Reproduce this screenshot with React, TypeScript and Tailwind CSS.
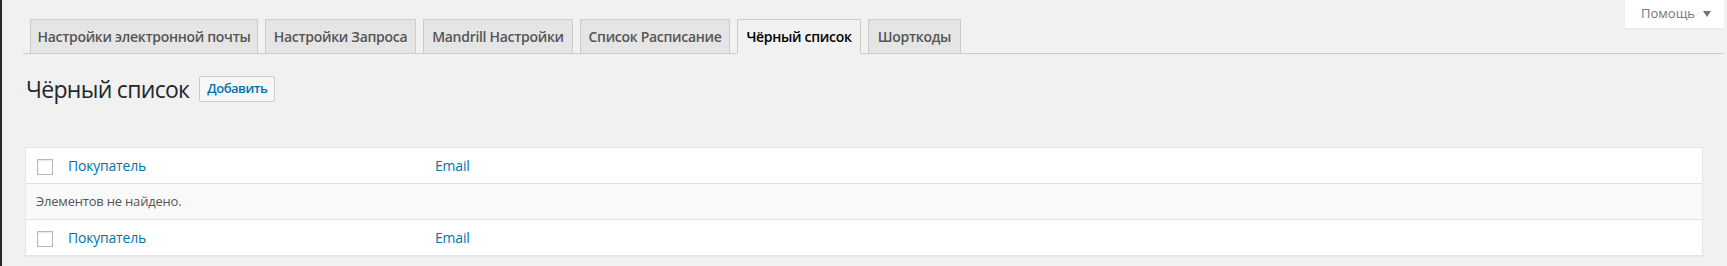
import React from "react";

const tabs = [
  { label: "Настройки электронной почты", w: "w-[228px]", active: false },
  { label: "Настройки Запроса", w: "w-[151px]", active: false },
  { label: "Mandrill Настройки", w: "w-[150px]", active: false },
  { label: "Список Расписание", w: "w-[150px]", active: false },
  { label: "Чёрный список", w: "w-[124px]", active: true },
  { label: "Шорткоды", w: "w-[93px]", active: false },
];

function Checkbox() {
  return (
    <span className="block h-[16px] w-[16px] border border-[#b4b9be] bg-white shadow-[inset_0_1px_2px_rgba(0,0,0,0.1)]" />
  );
}

function HeadRow({ last }: { last?: boolean }) {
  return (
    <div
      className={
        "flex items-center bg-white " +
        (last ? "h-[35px]" : "h-[36px] border-b border-[#e1e1e1]")
      }
    >
      <div className="flex w-[32px] shrink-0 items-center pl-[11px] pt-[2px]">
        <Checkbox />
      </div>
      <div className="w-[367px] shrink-0 pl-[10px] text-[14px] tracking-[-0.2px] text-[#0073aa]">Покупатель</div>
      <div className="flex-1 pl-[10px] text-[14px] tracking-[-0.2px] text-[#0073aa]">Email</div>
    </div>
  );
}

export default function App() {
  return (
    <div className="relative flex min-h-[266px] w-full bg-[#f1f1f1] font-['Open_Sans','Noto_Sans',sans-serif] text-[#444]">
      <div className="w-[2px] shrink-0 bg-[#23282d]" />
      <div className="flex-1 pl-[21px] pr-[3px]">
        <div className="flex gap-[7px] border-b border-[#ccc] pl-[7px] pt-[19px]">
          {tabs.map((t) => (
            <div
              key={t.label}
              className={
                "-mb-px flex h-[35px] shrink-0 items-center justify-center whitespace-nowrap border border-[#ccc] text-[14px] font-semibold leading-[24px] tracking-[-0.3px] " +
                t.w +
                " " +
                (t.active
                  ? "border-b-[#f1f1f1] bg-[#f1f1f1] text-black"
                  : "bg-[#e5e5e5] text-[#555]")
              }
            >
              {t.label}
            </div>
          ))}
        </div>

        <div className="ml-[3px] mt-[22px] flex items-center gap-[10px]">
          <h1 className="text-[23px] font-normal leading-[26px] tracking-[-0.7px] text-[#23282d]">Чёрный список</h1>
          <button className="h-[26px] rounded-[2px] border border-[#ccc] bg-[#f7f7f7] px-[7px] text-[13px] font-semibold tracking-[-0.5px] text-[#0073aa]">
            Добавить
          </button>
        </div>

        <div className="ml-[2px] mr-[21px] mt-[45px] border border-[#e5e5e5] bg-white shadow-[0_1px_1px_rgba(0,0,0,0.04)]">
          <HeadRow />
          <div className="flex h-[36px] items-center border-b border-[#e1e1e1] bg-[#f9f9f9] pl-[10px] text-[13px] tracking-[-0.2px] text-[#555]">
            Элементов не найдено.
          </div>
          <HeadRow last />
        </div>
      </div>

      <div className="absolute right-[3px] top-0 flex h-[28px] w-[99px] items-center bg-white pl-[16px] text-[13px] text-[#72777c] shadow-[0_1px_1px_rgba(0,0,0,0.04)]">
        <span>Помощь</span>
        <svg className="ml-[8px]" width="8" height="6" viewBox="0 0 8 6">
          <path d="M0 0 H8 L4 6 Z" fill="#72777c" />
        </svg>
      </div>
    </div>
  );
}
